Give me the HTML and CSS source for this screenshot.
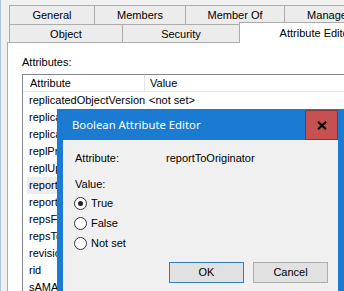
FILE: index.html
```html
<!DOCTYPE html>
<html lang="en">
<head>
  <meta charset="UTF-8" />
  <title>Attribute Editor</title>
  <link rel="stylesheet" href="styles.css">
</head>
<body>

  <div class="window">

    <!-- Property sheet tabs -->
    <div class="tabs">
      <div class="tab-row">
        <div class="tab tab-general">General</div>
        <div class="tab tab-members">Members</div>
        <div class="tab tab-memberof">Member Of</div>
        <div class="tab tab-managed">Managed By</div>
      </div>
      <div class="tab-row tab-row-front">
        <div class="tab tab-object">Object</div>
        <div class="tab tab-security">Security</div>
        <div class="tab tab-active">Attribute Editor</div>
      </div>
    </div>

    <!-- Attribute Editor page -->
    <div class="pane">
      <div class="pane-label">Attributes:</div>
      <div class="listview">
        <div class="lv-header">
          <div class="lv-col-attr">Attribute</div>
          <div class="lv-col-value">Value</div>
        </div>
        <div class="lv-row"><span class="lv-attr">replicatedObjectVersion</span><span class="lv-value">&lt;not set&gt;</span></div>
        <div class="lv-row"><span class="lv-attr">replicationSignature</span><span class="lv-value">&lt;not set&gt;</span></div>
        <div class="lv-row"><span class="lv-attr">replicaSource</span><span class="lv-value">&lt;not set&gt;</span></div>
        <div class="lv-row"><span class="lv-attr">replPropertyMetaData</span><span class="lv-value">AttID Ver</span></div>
        <div class="lv-row"><span class="lv-attr">replUpToDateVector</span><span class="lv-value">&lt;not set&gt;</span></div>
        <div class="lv-row lv-selected"><span class="lv-attr">reportToOriginator</span><span class="lv-value">&lt;not set&gt;</span></div>
        <div class="lv-row"><span class="lv-attr">reportToOwner</span><span class="lv-value">&lt;not set&gt;</span></div>
        <div class="lv-row"><span class="lv-attr">repsFrom</span><span class="lv-value">&lt;not set&gt;</span></div>
        <div class="lv-row"><span class="lv-attr">repsTo</span><span class="lv-value">&lt;not set&gt;</span></div>
        <div class="lv-row"><span class="lv-attr">revision</span><span class="lv-value">&lt;not set&gt;</span></div>
        <div class="lv-row"><span class="lv-attr">rid</span><span class="lv-value">&lt;not set&gt;</span></div>
        <div class="lv-row"><span class="lv-attr">sAMAccountName</span><span class="lv-value">&lt;not set&gt;</span></div>
      </div>
    </div>

    <!-- Boolean Attribute Editor dialog (floats over the sheet) -->
    <div class="dialog">
      <div class="dialog-title">
        <span class="dialog-caption">Boolean Attribute Editor</span>
        <div class="dialog-close">
          <svg width="10" height="9" viewBox="0 0 10 9">
            <path d="M1 0.8 L9 8.2 M9 0.8 L1 8.2" stroke="#000" stroke-width="2.2" fill="none" />
          </svg>
        </div>
      </div>
      <div class="dialog-body">
        <div class="field-row">
          <span class="field-label">Attribute:</span>
          <span class="field-value">reportToOriginator</span>
        </div>
        <div class="value-label">Value:</div>

        <div class="radio-row">
          <span class="radio radio-checked"></span>
          <span>True</span>
        </div>
        <div class="radio-row">
          <span class="radio"></span>
          <span>False</span>
        </div>
        <div class="radio-row">
          <span class="radio"></span>
          <span>Not set</span>
        </div>

        <div class="dialog-buttons">
          <div class="btn btn-default">OK</div>
          <div class="btn">Cancel</div>
        </div>
      </div>
    </div>

  </div>

</body>
</html>
```

FILE: styles.css
```css
/* Page: classic Windows dialog gray */
body {
  margin: 0;
  background: #f0f0f0;
  font-family: 'Liberation Sans', Arial, sans-serif;
  font-size: 11px;
  color: #000;
}

/* Property sheet window (only its left frame line is visible) */
.window {
  position: relative;
  width: 343px;
  height: 291px;
  border-left: 1px solid #a9c5e2;
  overflow: hidden;
}

/* Tabs */
.tabs {
  padding-top: 5px;
  padding-left: 8px;
}

.tab-row {
  display: flex;
  white-space: nowrap;
}

.tab {
  flex: none;
  box-sizing: border-box;
  height: 20px;
  margin-left: -1px;
  border: 1px solid #acacac;
  background: #ececec;
  line-height: 18px;
  text-align: center;
}
.tab:first-child {
  margin-left: 0;
}

.tab-row-front {
  height: 18px;
  margin-top: -1px;
}
.tab-row-front .tab {
  height: 18px;
  border-bottom: none;
  line-height: 18px;
}

.tab-general  { width: 86px; }
.tab-members  { width: 92px; }
.tab-memberof { width: 100px; }
.tab-managed  { width: 108px; }
.tab-object   { width: 114px; }
.tab-security { width: 118px; }

/* Selected tab: a little taller, joins the page below */
.tab-row-front .tab-active {
  position: relative;
  z-index: 1;
  width: 156px;
  height: 21px;
  margin-top: -2px;
  padding-right: 2px;
  background: #fff;
  line-height: 20px;
}

/* Tab page */
.pane {
  height: 260px;
  margin-left: 6px;
  padding: 13px 0 0 14px;
  border-top: 1px solid #acacac;
  border-left: 1px solid #acacac;
  background: #fff;
}

.pane-label {
  line-height: 13px;
  margin-bottom: 5px;
}

/* List view */
.listview {
  width: 340px;
  height: 240px;
  border: 1px solid #828790;
  background: #fff;
}

.lv-header {
  display: flex;
  height: 16px;
  border-bottom: 1px solid #e5e5e5;
  line-height: 16px;
}
.lv-col-attr {
  box-sizing: border-box;
  width: 122px;
  padding-left: 7px;
  border-right: 1px solid #e5e5e5;
}
.lv-col-value {
  padding-left: 5px;
}

.lv-row {
  display: flex;
  height: 17px;
  margin-left: 4px;
  line-height: 17px;
  white-space: nowrap;
}
.lv-attr {
  box-sizing: border-box;
  width: 118px;
  padding-left: 2px;
  overflow: hidden;
}
.lv-value {
  padding-left: 4px;
}
.lv-selected {
  background: #ececec;
}

/* Dialog */
.dialog {
  position: absolute;
  left: 56px;
  top: 109px;
  box-sizing: border-box;
  width: 289px;
  height: 200px;
  padding: 0 8px 0 6px;
  background: #1b7bd2;
}

.dialog-title {
  display: flex;
  justify-content: space-between;
  height: 31px;
  margin-left: -6px;
}
.dialog-caption {
  padding-left: 15px;
  font-family: 'Noto Sans', 'Open Sans', sans-serif;
  font-size: 11.3px;
  line-height: 31px;
  color: #fff;
}
.dialog-close {
  box-sizing: border-box;
  display: flex;
  align-items: center;
  justify-content: center;
  width: 33px;
  height: 30px;
  margin-top: 1px;
  border: 1px solid #7a3a3a;
  background: #c75050;
}

.dialog-body {
  height: 170px;
  padding: 12px 0 0 12px;
  background: #f0f0f0;
}

.field-row {
  display: flex;
  line-height: 13px;
}
.field-label {
  width: 91px;
}

.value-label {
  margin-top: 13px;
  line-height: 13px;
  margin-bottom: 2px;
}

.radio-row {
  display: flex;
  align-items: center;
  gap: 4px;
  height: 20px;
}
.radio {
  box-sizing: border-box;
  position: relative;
  width: 13px;
  height: 13px;
  margin-left: -1px;
  border: 1px solid #333;
  border-radius: 50%;
  background: #fff;
}
.radio-checked::after {
  content: '';
  position: absolute;
  left: 3px;
  top: 3px;
  width: 5px;
  height: 5px;
  border-radius: 50%;
  background: #222;
}

/* Buttons */
.dialog-buttons {
  display: flex;
  justify-content: flex-end;
  gap: 9px;
  margin-top: 9px;
  padding-right: 10px;
}
.btn {
  box-sizing: border-box;
  width: 75px;
  height: 21px;
  border: 1px solid #adadad;
  background: #e1e1e1;
  line-height: 19px;
  text-align: center;
}
.btn-default {
  border-color: #2f7fc5;
}
```
